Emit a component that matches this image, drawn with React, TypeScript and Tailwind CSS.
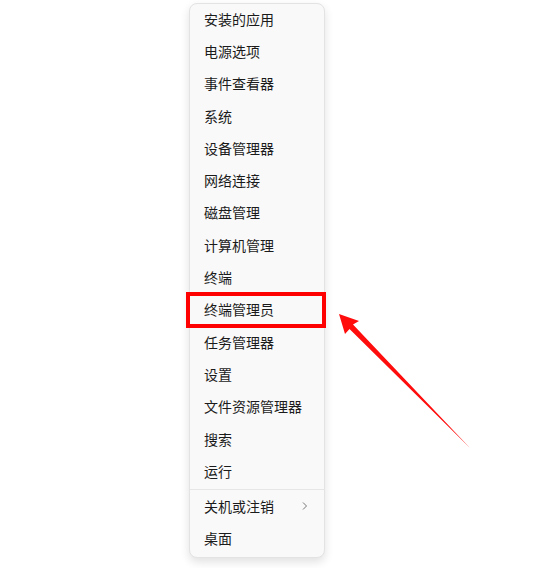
import React from "react";

const items = [
  "安装的应用",
  "电源选项",
  "事件查看器",
  "系统",
  "设备管理器",
  "网络连接",
  "磁盘管理",
  "计算机管理",
  "终端",
  "终端管理员",
  "任务管理器",
  "设置",
  "文件资源管理器",
  "搜索",
  "运行",
];

export default function App() {
  return (
    <div
      className="relative w-[544px] h-[568px] bg-white overflow-hidden"
      style={{ fontFamily: '"Noto Sans CJK SC", "Noto Sans", sans-serif' }}
    >
      <div className="absolute left-[189px] top-[3px] w-[136px] rounded-[8px] border border-[#e3e3e3] bg-[#f9f9f9] shadow-[0_4px_10px_rgba(0,0,0,0.12)] pb-[2px]">
        <div className="flex flex-col">
          {items.map((t) => (
            <div key={t} className="h-[32.3px] flex items-center pl-[14px] pb-[2px] text-[14px] text-[#1b1b1b]">
              {t}
            </div>
          ))}
        </div>
        <div className="h-px bg-[#e6e6e6] my-[1px]" />
        <div className="h-[32px] flex items-center justify-between pl-[14px] pr-[15px] pb-[2px] text-[14px] text-[#1b1b1b]">
          <span>关机或注销</span>
          <svg width="8" height="10" viewBox="0 0 8 10" fill="none">
            <path d="M2 1.5 L5.5 5 L2 8.5" stroke="#777" strokeWidth="1" />
          </svg>
        </div>
        <div className="h-[32px] flex items-center pl-[14px] pb-[2px] text-[14px] text-[#1b1b1b]">桌面</div>
      </div>
      <div className="absolute left-[186px] top-[292px] w-[140px] h-[36px] border-[4px] border-[#ff0000]" />
      <svg className="absolute left-0 top-0" width="544" height="568" viewBox="0 0 544 568">
        <polygon points="339,314 359,321 353,324.5 470,448 349.5,329 345,334" fill="#ff0d0d" />
      </svg>
    </div>
  );
}
